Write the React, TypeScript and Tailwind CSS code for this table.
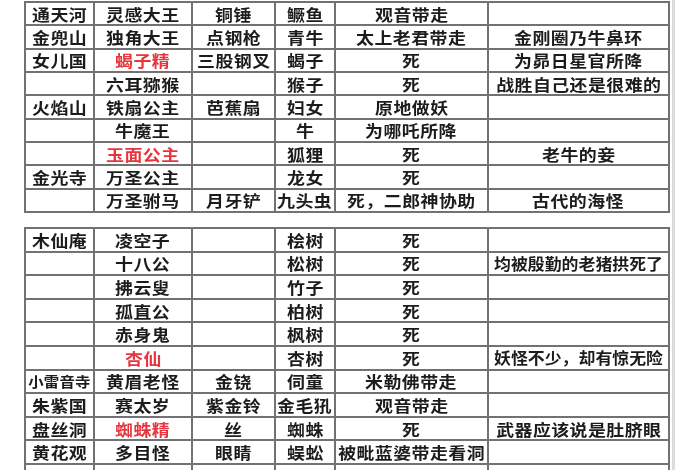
import React from "react";

type Row = { c: string[]; red?: boolean; small?: boolean };

const top: Row[] = [
  { c: ["通天河", "灵感大王", "铜锤", "鳜鱼", "观音带走", ""] },
  { c: ["金兜山", "独角大王", "点钢枪", "青牛", "太上老君带走", "金刚圈乃牛鼻环"] },
  { c: ["女儿国", "蝎子精", "三股钢叉", "蝎子", "死", "为昴日星官所降"], red: true },
  { c: ["", "六耳猕猴", "", "猴子", "死", "战胜自己还是很难的"] },
  { c: ["火焰山", "铁扇公主", "芭蕉扇", "妇女", "原地做妖", ""] },
  { c: ["", "牛魔王", "", "牛", "为哪吒所降", ""] },
  { c: ["", "玉面公主", "", "狐狸", "死", "老牛的妾"], red: true },
  { c: ["金光寺", "万圣公主", "", "龙女", "死", ""] },
  { c: ["", "万圣驸马", "月牙铲", "九头虫", "死，二郎神协助", "古代的海怪"] },
];

const bottom: Row[] = [
  { c: ["木仙庵", "凌空子", "", "桧树", "死", ""] },
  { c: ["", "十八公", "", "松树", "死", "均被殷勤的老猪拱死了"] },
  { c: ["", "拂云叟", "", "竹子", "死", ""] },
  { c: ["", "孤直公", "", "柏树", "死", ""] },
  { c: ["", "赤身鬼", "", "枫树", "死", ""] },
  { c: ["", "杏仙", "", "杏树", "死", "妖怪不少，却有惊无险"], red: true },
  { c: ["小雷音寺", "黄眉老怪", "金铙", "伺童", "米勒佛带走", ""], small: true },
  { c: ["朱紫国", "赛太岁", "紫金铃", "金毛犼", "观音带走", ""] },
  { c: ["盘丝洞", "蜘蛛精", "丝", "蜘蛛", "死", "武器应该说是肚脐眼"], red: true },
  { c: ["黄花观", "多目怪", "眼睛", "蜈蚣", "被毗蓝婆带走看洞", ""] },
  { c: ["", "", "", "", "", ""] },
];

function Cell({ text, red, small }: { text: string; red?: boolean; small?: boolean }) {
  const long = text.length >= 10;
  let cls = "text-[16px] tracking-[0.4px] scale-x-[1.12]";
  if (small) cls = "text-[14px] tracking-[0.2px] scale-x-[1.1]";
  else if (long) cls = "text-[15.5px] tracking-[0px] scale-x-[1.09]";
  return (
    <div className="flex items-center justify-center border-r-2 border-b-2 border-[#727272] overflow-visible whitespace-nowrap">
      <span
        className={`inline-block ${cls} font-bold leading-none ${red ? "text-[#e8343c]" : "text-[#1c1c1c]"}`}
      >
        {text}
      </span>
    </div>
  );
}

function Table({ rows, rowClass }: { rows: Row[]; rowClass: string }) {
  return (
    <div
      className={`grid grid-cols-[69px_98px_83px_60px_153px_181px] ${rowClass} border-l-2 border-t-2 border-[#727272] w-[646px]`}
    >
      {rows.map((r, i) =>
        r.c.map((t, j) => (
          <Cell key={`${i}-${j}`} text={t} red={r.red && j === 1} small={r.small && j === 0} />
        ))
      )}
    </div>
  );
}

export default function App() {
  return (
    <div className="w-[700px] h-[470px] overflow-hidden bg-white flex font-['Noto_Sans_CJK_SC','Noto_Sans',sans-serif] blur-[0.4px]">
      <div className="flex flex-col pl-[24px] pt-[1px] w-[672px]">
        <Table rows={top} rowClass="auto-rows-[23.35px]" />
        <div className="mt-[14px]">
          <Table rows={bottom} rowClass="auto-rows-[23.6px]" />
        </div>
      </div>
      <div className="w-[3px] h-full bg-[#dcdcdc]" />
    </div>
  );
}
